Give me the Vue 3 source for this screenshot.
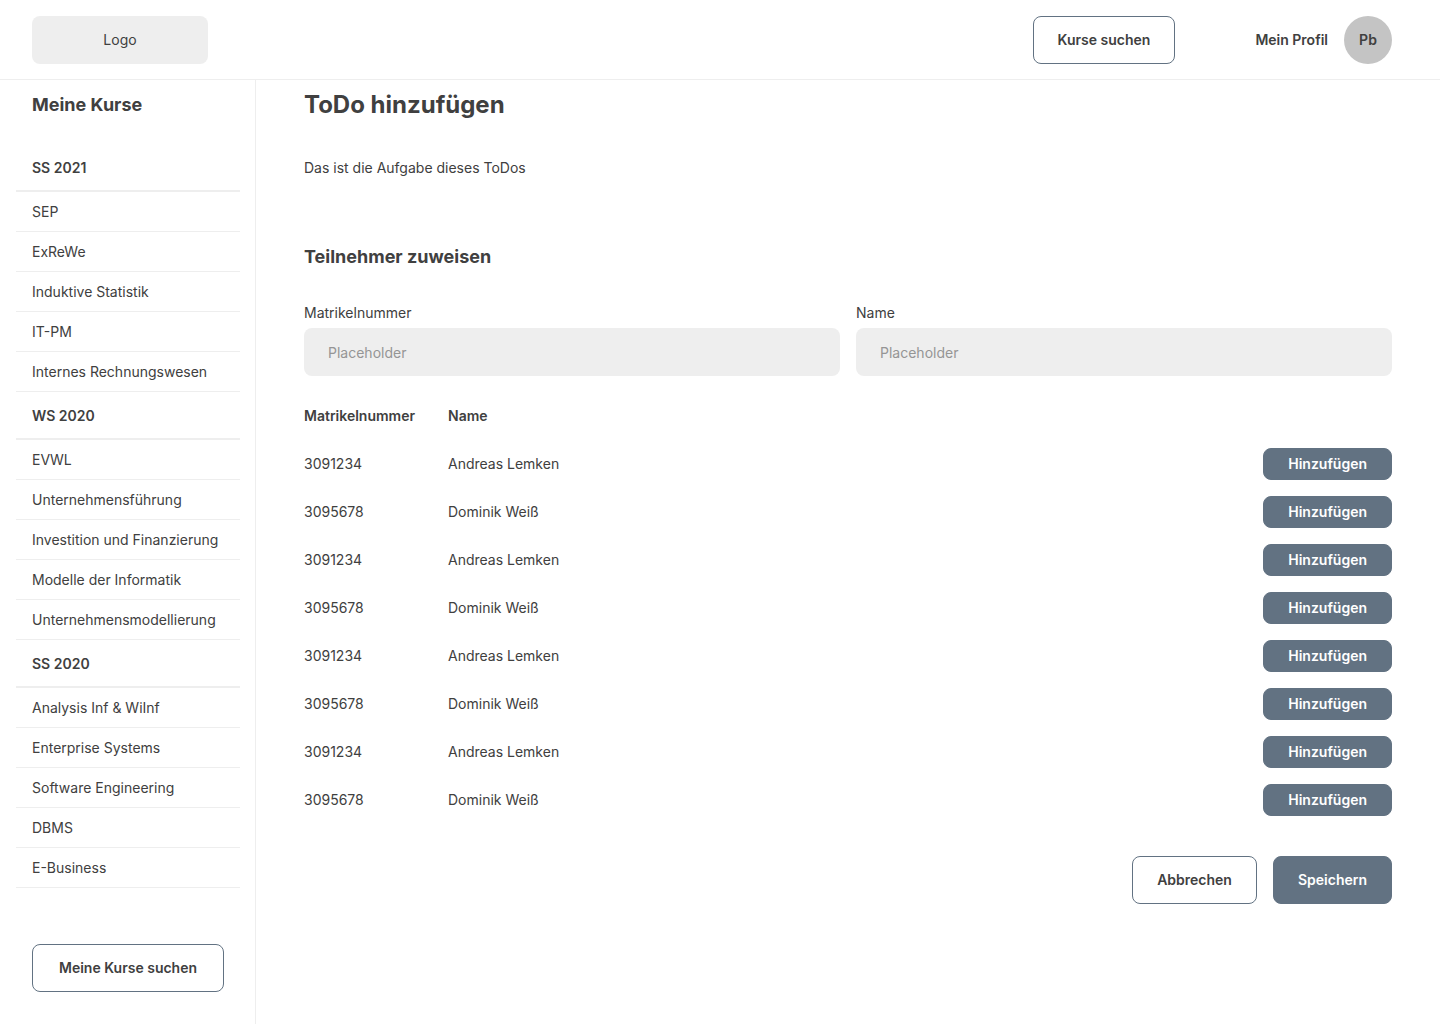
<script setup>
import { ref } from 'vue'

const semesters = [
  { name: 'SS 2021', courses: ['SEP', 'ExReWe', 'Induktive Statistik', 'IT-PM', 'Internes Rechnungswesen'] },
  { name: 'WS 2020', courses: ['EVWL', 'Unternehmensführung', 'Investition und Finanzierung', 'Modelle der Informatik', 'Unternehmensmodellierung'] },
  { name: 'SS 2020', courses: ['Analysis Inf & WiInf', 'Enterprise Systems', 'Software Engineering', 'DBMS', 'E-Business'] }
]

const people = [
  { number: '3091234', name: 'Andreas Lemken' },
  { number: '3095678', name: 'Dominik Weiß' }
]
const participants = Array.from({ length: 8 }, (_, i) => people[i % 2])

const number = ref('')
const name = ref('')
</script>

<template>
  <div class="page">
    <header class="topbar">
      <a class="logo" href="#">Logo</a>
      <div class="topbar-right">
        <button class="btn outline" type="button">Kurse suchen</button>
        <a class="profile" href="#">
          <span>Mein Profil</span>
          <span class="avatar">Pb</span>
        </a>
      </div>
    </header>

    <div class="body">
      <aside class="sidebar">
        <h2 class="title">Meine Kurse</h2>
        <nav>
          <section v-for="semester in semesters" :key="semester.name">
            <h3>{{ semester.name }}</h3>
            <ul>
              <li v-for="course in semester.courses" :key="course">
                <a href="#">{{ course }}</a>
              </li>
            </ul>
          </section>
        </nav>
        <button class="btn outline search" type="button">Meine Kurse suchen</button>
      </aside>

      <main>
        <h1>ToDo hinzufügen</h1>
        <p class="task">Das ist die Aufgabe dieses ToDos</p>
        <h2 class="title">Teilnehmer zuweisen</h2>

        <form @submit.prevent>
          <div class="fields">
            <div class="field">
              <label for="number">Matrikelnummer</label>
              <input id="number" v-model="number" type="text" placeholder="Placeholder">
            </div>
            <div class="field">
              <label for="name">Name</label>
              <input id="name" v-model="name" type="text" placeholder="Placeholder">
            </div>
          </div>

          <table>
            <thead>
              <tr>
                <th class="number" scope="col">Matrikelnummer</th>
                <th scope="col">Name</th>
                <td></td>
              </tr>
            </thead>
            <tbody>
              <tr v-for="(person, i) in participants" :key="i">
                <td>{{ person.number }}</td>
                <td>{{ person.name }}</td>
                <td>
                  <button class="btn filled small" type="button">Hinzufügen</button>
                </td>
              </tr>
            </tbody>
          </table>

          <div class="actions">
            <button class="btn outline" type="button">Abbrechen</button>
            <button class="btn filled" type="submit">Speichern</button>
          </div>
        </form>
      </main>
    </div>
  </div>
</template>

<style>
body {
  margin: 0;
  background: #fff;
}
</style>

<style scoped>
.page {
  display: flex;
  flex-direction: column;
  min-height: 100vh;
  color: #404040;
  font: 400 14px/24px Inter, sans-serif;
}

.page *,
.page {
  box-sizing: border-box;
}

h1, h2, h3, p, ul {
  margin: 0;
  padding: 0;
}

a {
  color: inherit;
  text-decoration: none;
}

.topbar {
  display: flex;
  align-items: center;
  justify-content: space-between;
  height: 80px;
  padding: 0 48px 0 32px;
  border-bottom: 1px solid #eee;
}

.logo {
  width: 176px;
  border-radius: 8px;
  background: #eee;
  line-height: 48px;
  text-align: center;
}

.topbar-right {
  display: flex;
  align-items: center;
  gap: 80px;
}

.profile {
  display: flex;
  align-items: center;
  gap: 16px;
  font-weight: 600;
}

.avatar {
  width: 48px;
  border-radius: 50%;
  background: #c4c4c4;
  line-height: 48px;
  text-align: center;
}

.btn {
  height: 48px;
  padding: 0 24px;
  border: 1px solid #627282;
  border-radius: 8px;
  font: inherit;
  font-weight: 600;
  cursor: pointer;
}

.outline {
  background: #fff;
  color: #404040;
}

.filled {
  background: #627282;
  color: #fff;
}

.small {
  display: block;
  height: 32px;
  margin-left: auto;
}

.body {
  display: flex;
  flex: 1;
}

.sidebar {
  display: flex;
  flex: 0 0 256px;
  flex-direction: column;
  padding: 8px 15px 32px 16px;
  border-right: 1px solid #eee;
}

.title {
  font-size: 18px;
  font-weight: 700;
  line-height: 34px;
}

.sidebar .title {
  margin-bottom: 22px;
  padding: 0 16px;
}

.sidebar h3 {
  height: 48px;
  padding: 0 16px;
  border-bottom: 2px solid #eee;
  font-size: 14px;
  font-weight: 600;
  line-height: 48px;
}

.sidebar ul {
  list-style: none;
}

.sidebar li {
  height: 40px;
  padding: 0 16px;
  border-bottom: 1px solid #eee;
  line-height: 40px;
}

.search {
  margin: 56px 16px 0;
}

main {
  flex: 1;
  min-width: 0;
  padding: 8px 48px 32px;
}

h1 {
  font-size: 24px;
  font-weight: 700;
  line-height: 34px;
}

.task {
  margin: 34px 0 60px;
}

.fields {
  display: flex;
  gap: 16px;
  margin: 27px 0 16px;
}

.field {
  display: flex;
  flex: 1;
  flex-direction: column;
  gap: 3px;
  min-width: 0;
}

input {
  height: 48px;
  padding: 0 24px;
  border: 0;
  border-radius: 8px;
  background: #eee;
  color: inherit;
  font: inherit;
}

input::placeholder {
  color: #959595;
  opacity: 1;
}

table {
  width: 100%;
  border-collapse: collapse;
}

th,
td {
  height: 48px;
  padding: 0;
  text-align: left;
}

th {
  font-weight: 600;
}

.number {
  width: 144px;
}

.actions {
  display: flex;
  justify-content: flex-end;
  gap: 16px;
  margin-top: 32px;
}
</style>
